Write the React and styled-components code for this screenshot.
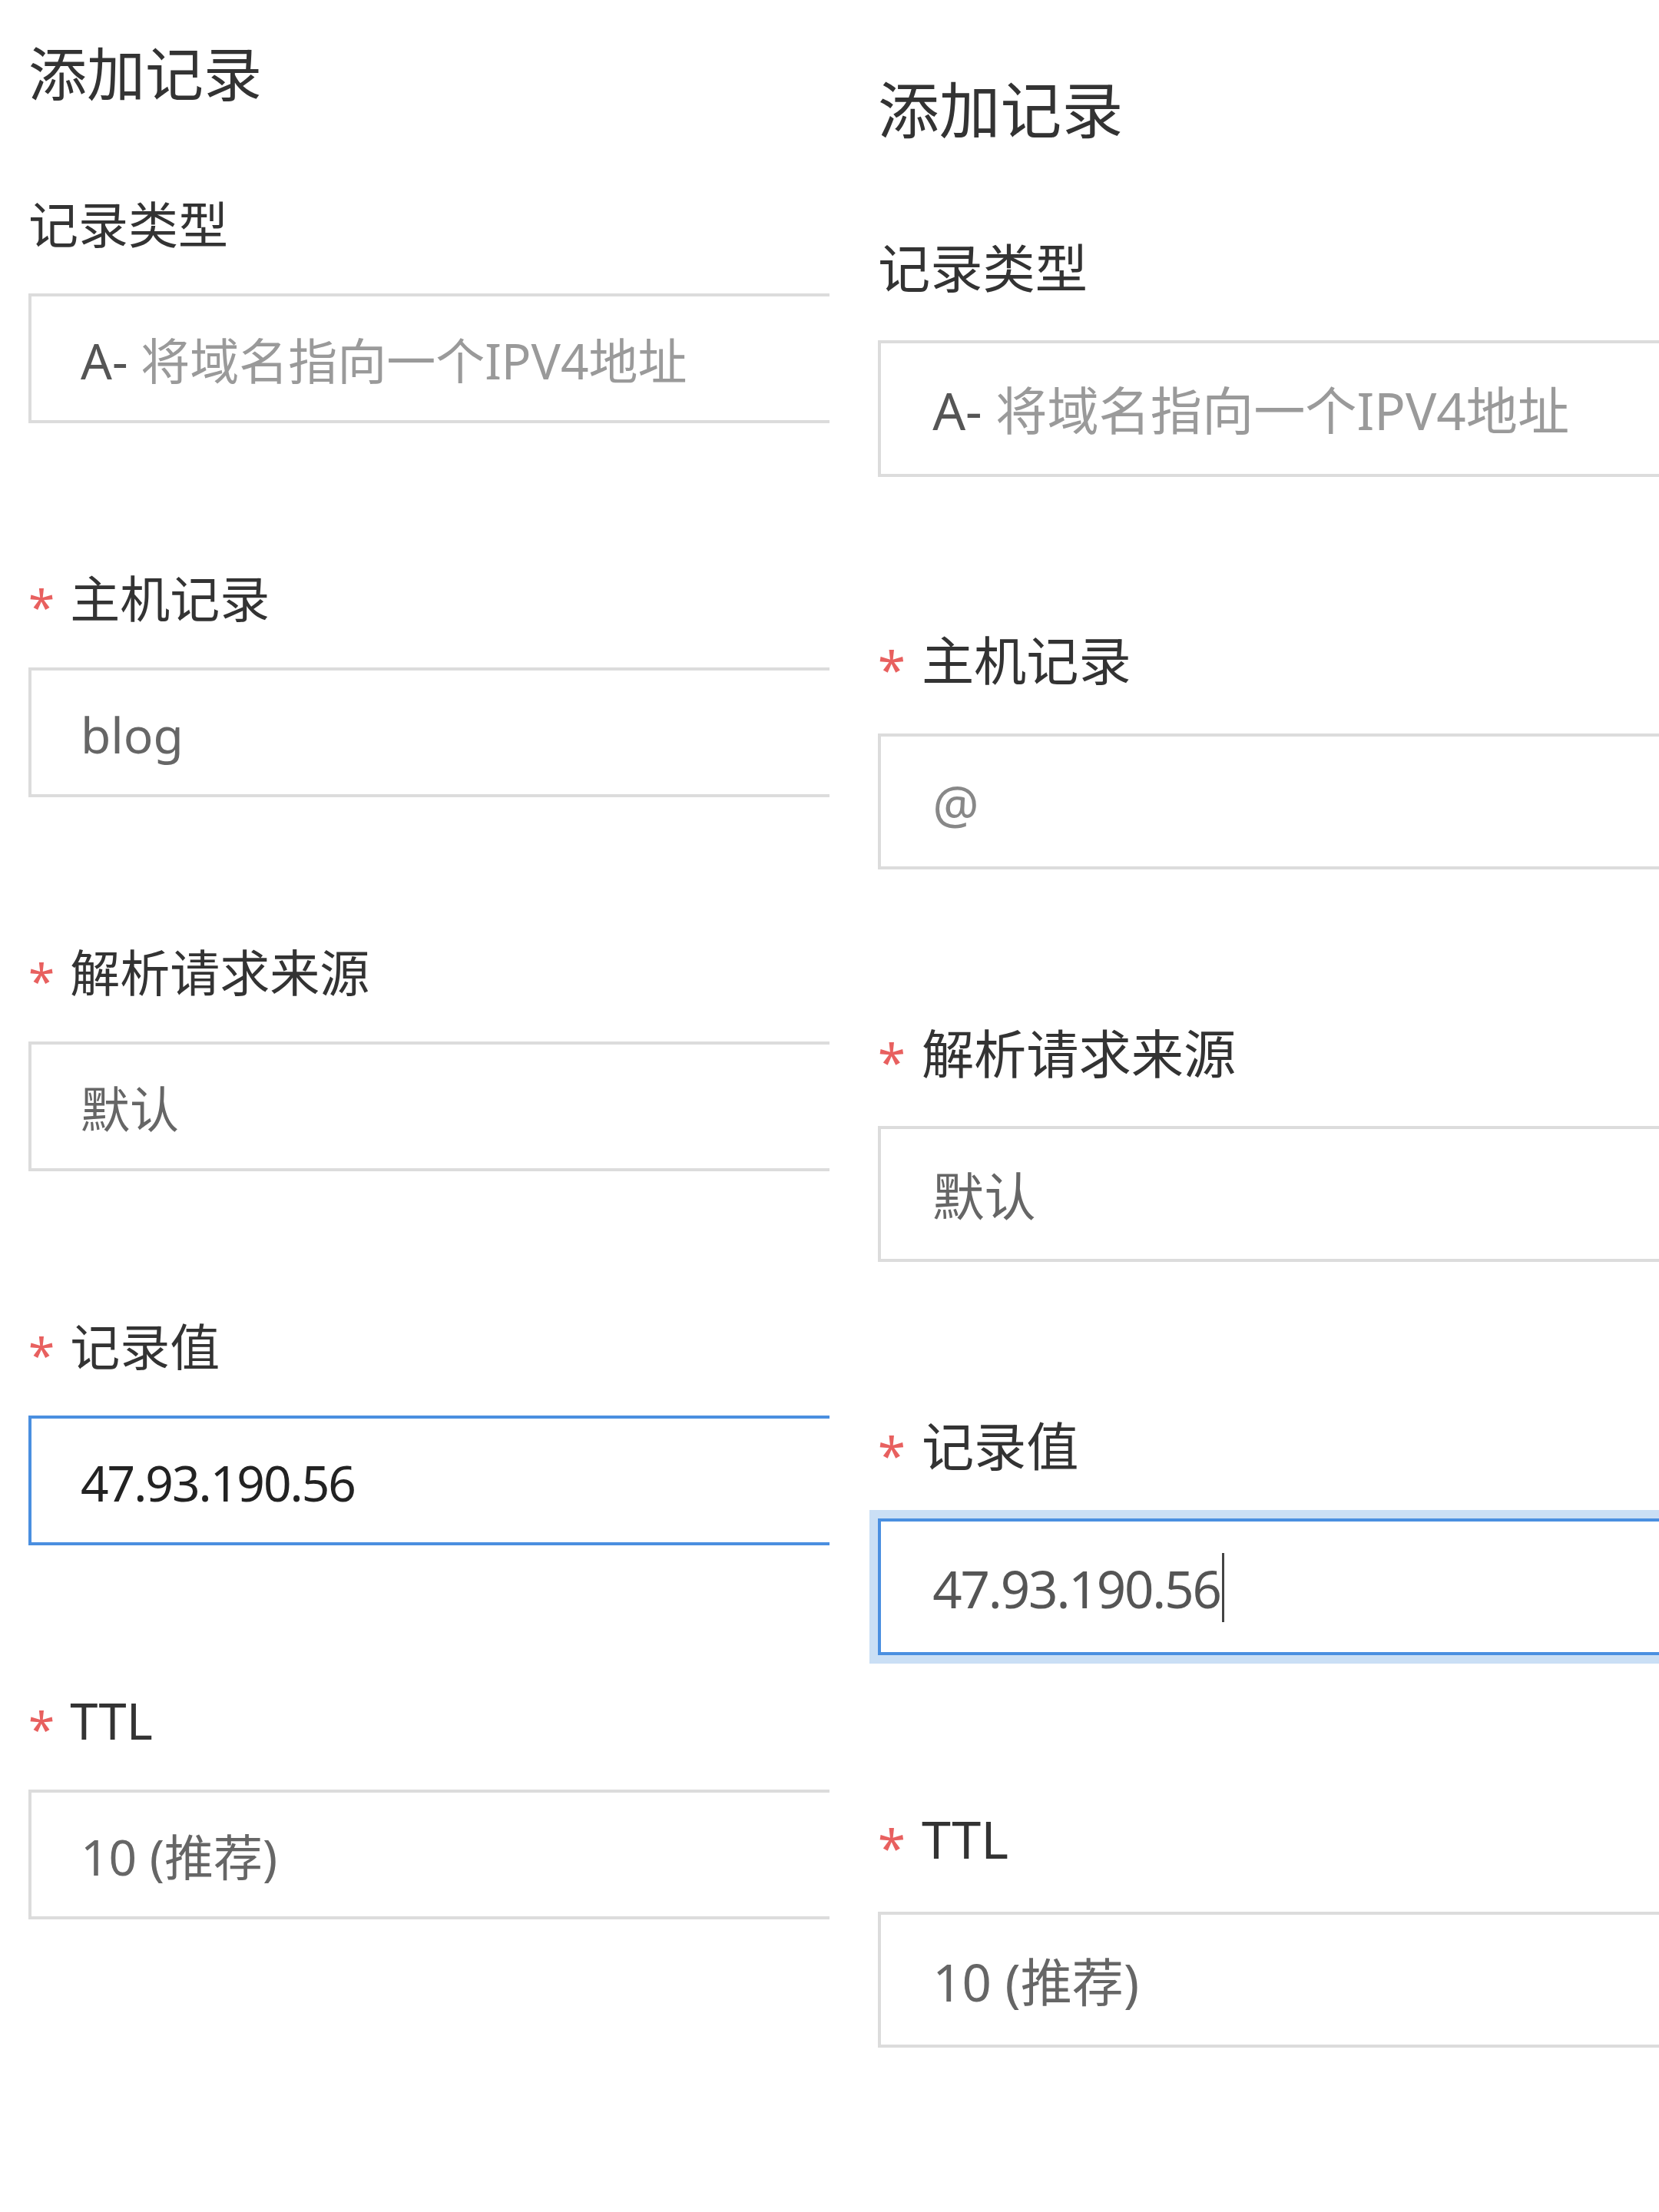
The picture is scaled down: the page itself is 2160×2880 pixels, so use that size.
import styled, { createGlobalStyle } from "styled-components";

const GlobalStyle = createGlobalStyle`
  html,
  body {
    margin: 0;
    padding: 0;
    background: #fff;
  }

  body {
    font-family: "Noto Sans", "Noto Sans CJK SC", sans-serif;
  }
`;

const Page = styled.div`
  display: flex;
  width: 2160px;
  height: 2880px;
  overflow: hidden;
  background: #fff;
`;

const Panel = styled.section`
  box-sizing: border-box;
  width: 1080px;
  flex-shrink: 0;
  overflow: hidden;
  padding: ${(p) => p.$top}px 0 0 ${(p) => p.$left}px;
`;

const Title = styled.h2`
  margin: 0 0 ${(p) => 126 * p.$s}px;
  font-size: ${(p) => 76 * p.$s}px;
  font-weight: 400;
  line-height: 1;
  color: #333;
`;

const Field = styled.div`
  margin-bottom: ${(p) => 196 * p.$s}px;
`;

const Label = styled.div`
  display: flex;
  align-items: flex-start;
  height: ${(p) => 65 * p.$s}px;
  margin-bottom: ${(p) => 57 * p.$s}px;
  font-size: ${(p) => 65 * p.$s}px;
  line-height: 1;
  color: #333;
  white-space: nowrap;
`;

const Required = styled.span`
  padding-top: ${(p) => 11 * p.$s}px;
  margin-right: ${(p) => 20 * p.$s}px;
  font-size: ${(p) => 62 * p.$s}px;
  line-height: 1;
  color: #e8605f;
`;

const Box = styled.div`
  box-sizing: border-box;
  display: flex;
  align-items: center;
  width: 1400px;
  height: ${(p) => 169 * p.$s}px;
  padding: ${(p) => 6 * p.$s}px 0 0 ${(p) => 64 * p.$s}px;
  border: 4px solid ${(p) => (p.$focused ? "#4a8fe0" : "#dcdcdc")};
  box-shadow: ${(p) => (p.$glow ? "0 0 0 11px #cadff5" : "none")};
  font-size: ${(p) => 64 * p.$s}px;
  line-height: 1;
  letter-spacing: ${(p) => (p.$tight ? -2 * p.$s : 0)}px;
  color: ${(p) => p.$color || "#666"};
  white-space: nowrap;
`;

const Dim = styled.span`
  color: #9a9a9a;
`;

const Caret = styled.span`
  display: inline-block;
  width: 3px;
  height: ${(p) => 85 * p.$s}px;
  margin-left: 2px;
  margin-top: -${(p) => 4 * p.$s}px;
  background: #444;
`;

const FormField = ({ s, label, required, children, ...box }) => (
  <Field $s={s}>
    <Label $s={s}>
      {required && <Required $s={s}>*</Required>}
      {label}
    </Label>
    <Box $s={s} {...box}>
      {children}
    </Box>
  </Field>
);

const RecordForm = ({ s, top, left, host, valueColor, glow, caret }) => (
  <Panel $top={top} $left={left}>
    <Title $s={s}>添加记录</Title>
    <FormField s={s} label="记录类型" $color="#555">
      A-&nbsp;<Dim>将域名指向一个IPV4地址</Dim>
    </FormField>
    <FormField s={s} label="主机记录" required $color={host === "@" ? "#888" : "#666"}>
      {host}
    </FormField>
    <FormField s={s} label="解析请求来源" required>
      默认
    </FormField>
    <FormField s={s} label="记录值" required $focused $tight $glow={glow} $color={valueColor}>
      47.93.190.56
      {caret && <Caret $s={s} />}
    </FormField>
    <FormField s={s} label="TTL" required>
      10 (推荐)
    </FormField>
  </Panel>
);

const App = () => {
  return (
    <>
      <GlobalStyle />
      <Page>
        <RecordForm s={1} top={58} left={37} host="blog" valueColor="#222" />
        <RecordForm s={1.05} top={103} left={63} host="@" valueColor="#555" glow caret />
      </Page>
    </>
  );
};

export default App;
